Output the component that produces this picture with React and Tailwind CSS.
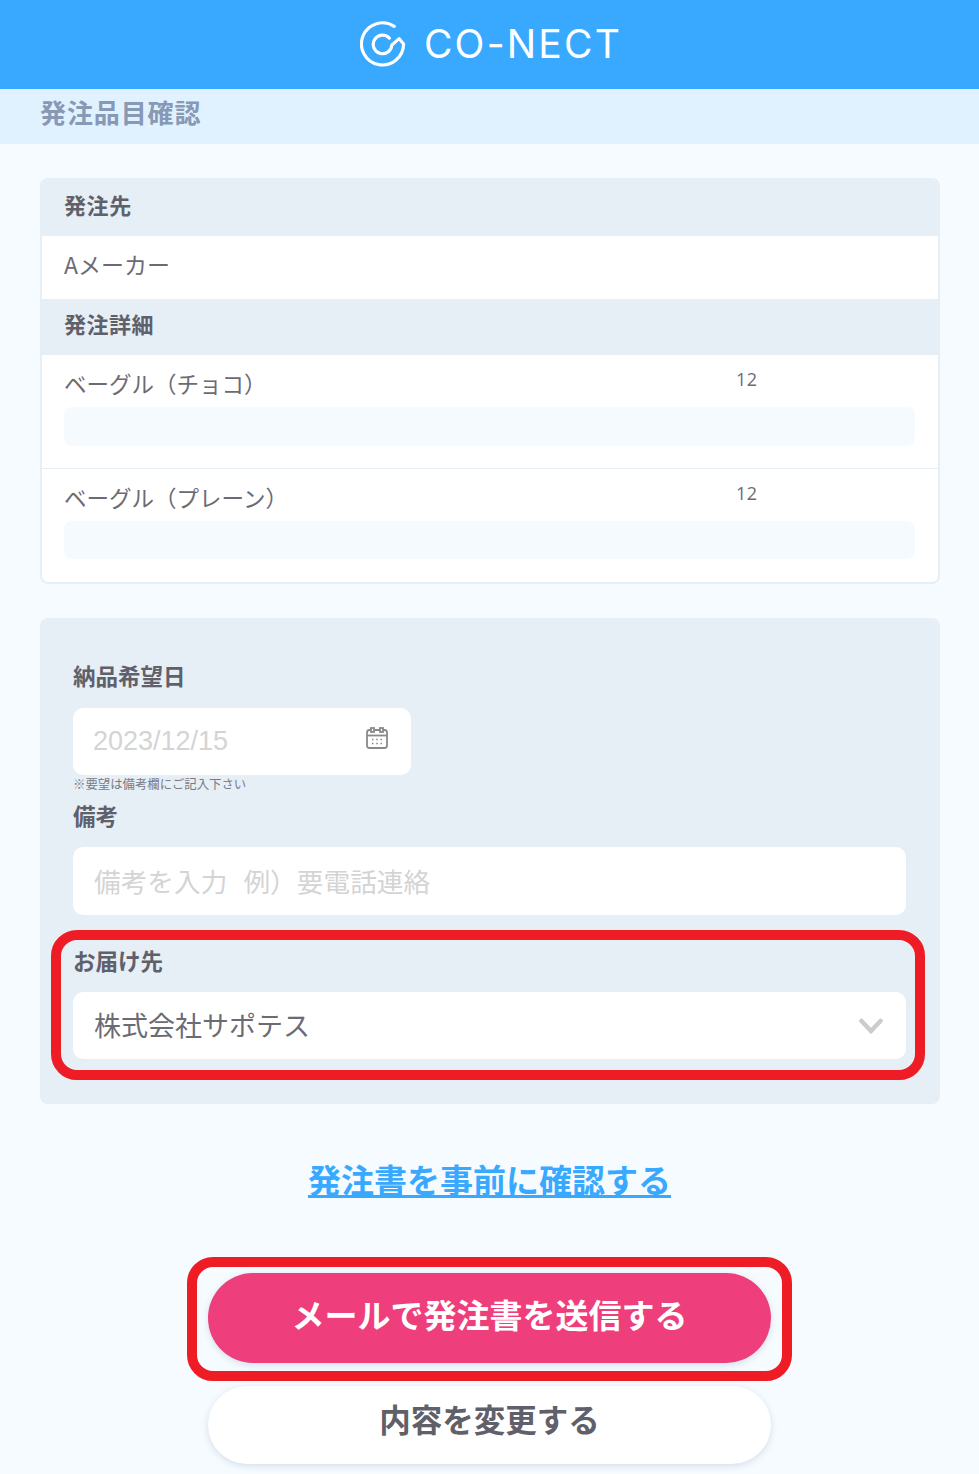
import React from "react";

function Logo() {
  return (
    <svg width="47" height="47" viewBox="0 0 48 48" fill="none" stroke="white" strokeWidth="3.2" strokeLinecap="round" strokeLinejoin="round" className="shrink-0 ml-[3px]">
      <path d="M30 17.5A9.5 9.5 0 1 0 32.5 24.5L40 18L44.5 23.5A21.5 21.5 0 1 1 35 5.5" />
    </svg>
  );
}

function Item({ name, qty, last }) {
  return (
    <div className={last ? "pl-[22px] pr-[23px] pt-[10px] pb-[23px]" : "pl-[22px] pr-[23px] pt-[10px] pb-[22px] border-b border-[#e6eef6]"}>
      <div className="flex h-[42px]">
        <div className="flex-1 text-[22.5px] leading-[36px] text-[#6b6b75]">{name}</div>
        <div className="w-[179px] text-[18px] leading-[28px] tracking-[0.5px] text-[#6b6b75] font-['Open_Sans',sans-serif]">{qty}</div>
      </div>
      <div className={last ? "h-[38px] rounded-[8px] bg-[#f5faff]" : "h-[39px] rounded-[8px] bg-[#f5faff]"} />
    </div>
  );
}

export default function App() {
  return (
    <div className="relative w-[979px] h-[1474px] overflow-hidden bg-[#f5fbff] font-['Noto_Sans_CJK_JP','Liberation_Sans',sans-serif]">
      <header className="h-[89px] bg-[#38a9ff] flex items-center justify-center gap-[17px]">
        <Logo />
        <span className="text-white text-[39px] leading-none -mt-[2px] tracking-[2.2px] font-['Inter',sans-serif] font-normal">CO-NECT</span>
      </header>
      <div className="h-[55px] bg-[#e0f1ff] pl-[40px] text-[26px] leading-[45px] font-bold text-[#8799b5] tracking-[0.9px]">発注品目確認</div>

      <section className="ml-[40px] w-[900px] mt-[34px] rounded-[8px] border-2 border-[#e6eef6] bg-white overflow-hidden">
        <div className="h-[56px] bg-[#e6eef6] px-[22px] text-[22px] leading-[48px] font-bold text-[#60606a] tracking-[0.6px]">発注先</div>
        <div className="h-[63px] px-[22px] text-[23px] leading-[56px] text-[#6b6b75]">Aメーカー</div>
        <div className="h-[56px] bg-[#e6eef6] px-[22px] text-[22px] leading-[48px] font-bold text-[#60606a] tracking-[0.5px]">発注詳細</div>
        <Item name="ベーグル（チョコ）" qty="12" />
        <Item name="ベーグル（プレーン）" qty="12" last />
      </section>

      <section className="ml-[40px] w-[900px] mt-[34px] h-[486px] rounded-[8px] bg-[#e6eef6] pl-[33px] pr-[34px] pt-[42px]">
        <div className="text-[22.5px] leading-[34px] -mt-[2px] font-bold text-[#60606a]">納品希望日</div>
        <div className="mt-[16px] w-[338px] h-[67px] rounded-[10px] bg-white flex items-center justify-between pl-[20px] pr-[22px]">
          <span className="text-[27px] text-[#d4d4d4] font-['Liberation_Sans',sans-serif]">2023/12/15</span>
          <svg width="24" height="24" viewBox="0 0 24 24" fill="none" stroke="#8a8a8a" strokeWidth="1.8" className="mb-[7px]">
            <rect x="2" y="4" width="20" height="18" rx="2.5" />
            <path d="M2 9.5H22" />
            <rect x="6" y="2" width="3" height="4" fill="white" />
            <rect x="15" y="2" width="3" height="4" fill="white" />
            <path d="M7 13.5H8.5M11.2 13.5H12.7M15.5 13.5H17M7 17.5H8.5M11.2 17.5H12.7M15.5 17.5H17" strokeWidth="1.6" />
          </svg>
        </div>
        <div className="mt-[1px] text-[12.4px] leading-[16px] text-[#7a7a84]">※要望は備考欄にご記入下さい</div>
        <div className="mt-[6px] text-[22.5px] leading-[34px] font-bold text-[#60606a]">備考</div>
        <div className="mt-[15px] h-[68px] rounded-[10px] bg-white flex items-center pl-[21px] text-[26.7px] leading-[38px] pb-[1px] text-[#d4d4d4] [word-spacing:10px]">備考を入力 例）要電話連絡</div>
        <div className="mt-[28px] text-[22.5px] leading-[34px] font-bold text-[#60606a]">お届け先</div>
        <div className="mt-[15px] h-[67px] rounded-[10px] bg-white flex items-center justify-between pl-[21px] pr-[23px]">
          <span className="text-[27px] text-[#6b6b75]">株式会社サポテス</span>
          <svg width="24" height="16" viewBox="0 0 24 16" fill="none" stroke="#cccccc" strokeWidth="4.5" strokeLinecap="round" strokeLinejoin="miter">
            <path d="M2.5 3L12 13L21.5 3" />
          </svg>
        </div>
      </section>

      <div className="mt-[51px] text-center">
        <a className="text-[#38a9ff] text-[33px] leading-[48px] font-bold underline">発注書を事前に確認する</a>
      </div>

      <div className="mt-[70px] flex flex-col items-center gap-[23px]">
        <button className="w-[563px] h-[90px] pb-[6px] rounded-full bg-[#ee3f7c] text-white text-[33px] font-bold shadow-[0_2px_6px_rgba(120,140,170,0.25)]">メールで発注書を送信する</button>
        <button className="w-[563px] h-[78px] pb-[12px] rounded-full bg-white text-[#60606a] text-[31.5px] font-bold shadow-[0_2px_6px_rgba(120,140,170,0.25)]">内容を変更する</button>
      </div>

      <div className="absolute left-[51px] top-[930px] w-[874px] h-[150px] rounded-[26px] border-[10px] border-[#ee1c25]" />
      <div className="absolute left-[187px] top-[1257px] w-[605px] h-[124px] rounded-[26px] border-[10px] border-[#ee1c25]" />
    </div>
  );
}
